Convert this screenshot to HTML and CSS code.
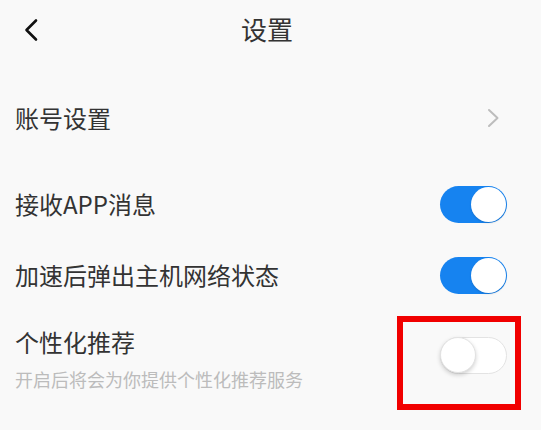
FILE: index.html
```html
<!DOCTYPE html>
<html lang="zh-CN">
<head>
<meta charset="utf-8">
<title>设置</title>
<link rel="stylesheet" href="styles.css">
</head>
<body>
<div class="page">
  <header class="nav">
    <span class="back">
      <svg width="16" height="24" viewBox="0 0 16 24"><path d="M13 2.5 L3.5 12 L13 21.5" fill="none" stroke="#111" stroke-width="2.6" stroke-linecap="round" stroke-linejoin="round"/></svg>
    </span>
    <h1 class="title">设置</h1>
    <span></span>
  </header>

  <div class="row row-link">
    <span class="label">账号设置</span>
    <svg class="chev" width="13" height="20" viewBox="0 0 13 20"><path d="M2 2 L10.5 10 L2 18" fill="none" stroke="#bdbdbd" stroke-width="2" stroke-linecap="round" stroke-linejoin="round"/></svg>
  </div>

  <div class="row row-a">
    <span class="label">接收APP消息</span>
    <span class="switch on"><span class="knob"></span></span>
  </div>

  <div class="row row-b">
    <span class="label">加速后弹出主机网络状态</span>
    <span class="switch on"><span class="knob"></span></span>
  </div>

  <div class="row row-multi">
    <div class="text">
      <div class="label">个性化推荐</div>
      <div class="desc">开启后将会为你提供个性化推荐服务</div>
    </div>
    <span class="switch off"><span class="knob"></span></span>
    <div class="highlight"></div>
  </div>
</div>
</body>
</html>
```

FILE: styles.css
```css
html, body {
  margin: 0;
  padding: 0;
  background: #f9f9f9;
}

.page {
  width: 541px;
  height: 430px;
  font-family: "Noto Sans CJK SC", "Noto Sans", sans-serif;
  color: #333;
  overflow: hidden;
}

.nav {
  height: 58px;
  display: grid;
  grid-template-columns: 1fr auto 1fr;
  align-items: center;
  padding-right: 7px;
}

.back {
  display: flex;
  padding-left: 23px;
  padding-top: 1px;
}

.title {
  margin: 0;
  font-size: 26px;
  font-weight: 400;
  line-height: 36px;
  color: #333;
}

.row {
  display: flex;
  align-items: center;
  justify-content: space-between;
  padding: 0 34px 0 15px;
}

.label {
  font-size: 24px;
  line-height: 34px;
  color: #333;
}

.row-link {
  margin-top: 30px;
  height: 60px;
}

.chev {
  margin-right: 7px;
}

.row-a {
  margin-top: 20px;
  height: 72px;
}

.row-b {
  height: 70px;
}

.switch {
  position: relative;
  width: 67px;
  height: 37px;
  border-radius: 19px;
  box-sizing: border-box;
  flex: none;
}

.switch.on {
  background: #1683f0;
}

.switch.off {
  background: #fff;
  border: 1px solid #e3e3e3;
}

.knob {
  position: absolute;
  top: 1px;
  width: 35px;
  height: 35px;
  border-radius: 50%;
  background: #fff;
  box-sizing: border-box;
}

.switch.on .knob {
  right: 1px;
  box-shadow: 0 1px 2px rgba(0, 0, 0, 0.15);
}

.switch.off .knob {
  top: -1px;
  left: -1px;
  width: 36px;
  height: 36px;
  border: 1px solid #e2e2e2;
  box-shadow: 0 2px 4px rgba(0, 0, 0, 0.18);
}

.row-multi {
  position: relative;
  align-items: flex-start;
  padding-top: 14px;
  height: 100px;
  box-sizing: border-box;
}

.row-multi .label {
  line-height: 36px;
}

.desc {
  margin-top: 6px;
  font-size: 18px;
  line-height: 26px;
  color: #bcbcbc;
}

.row-multi .switch {
  margin-top: 13px;
}

.highlight {
  position: absolute;
  left: 397px;
  top: 6px;
  width: 124px;
  height: 94px;
  border: 6px solid #f10000;
  box-sizing: border-box;
}
```
